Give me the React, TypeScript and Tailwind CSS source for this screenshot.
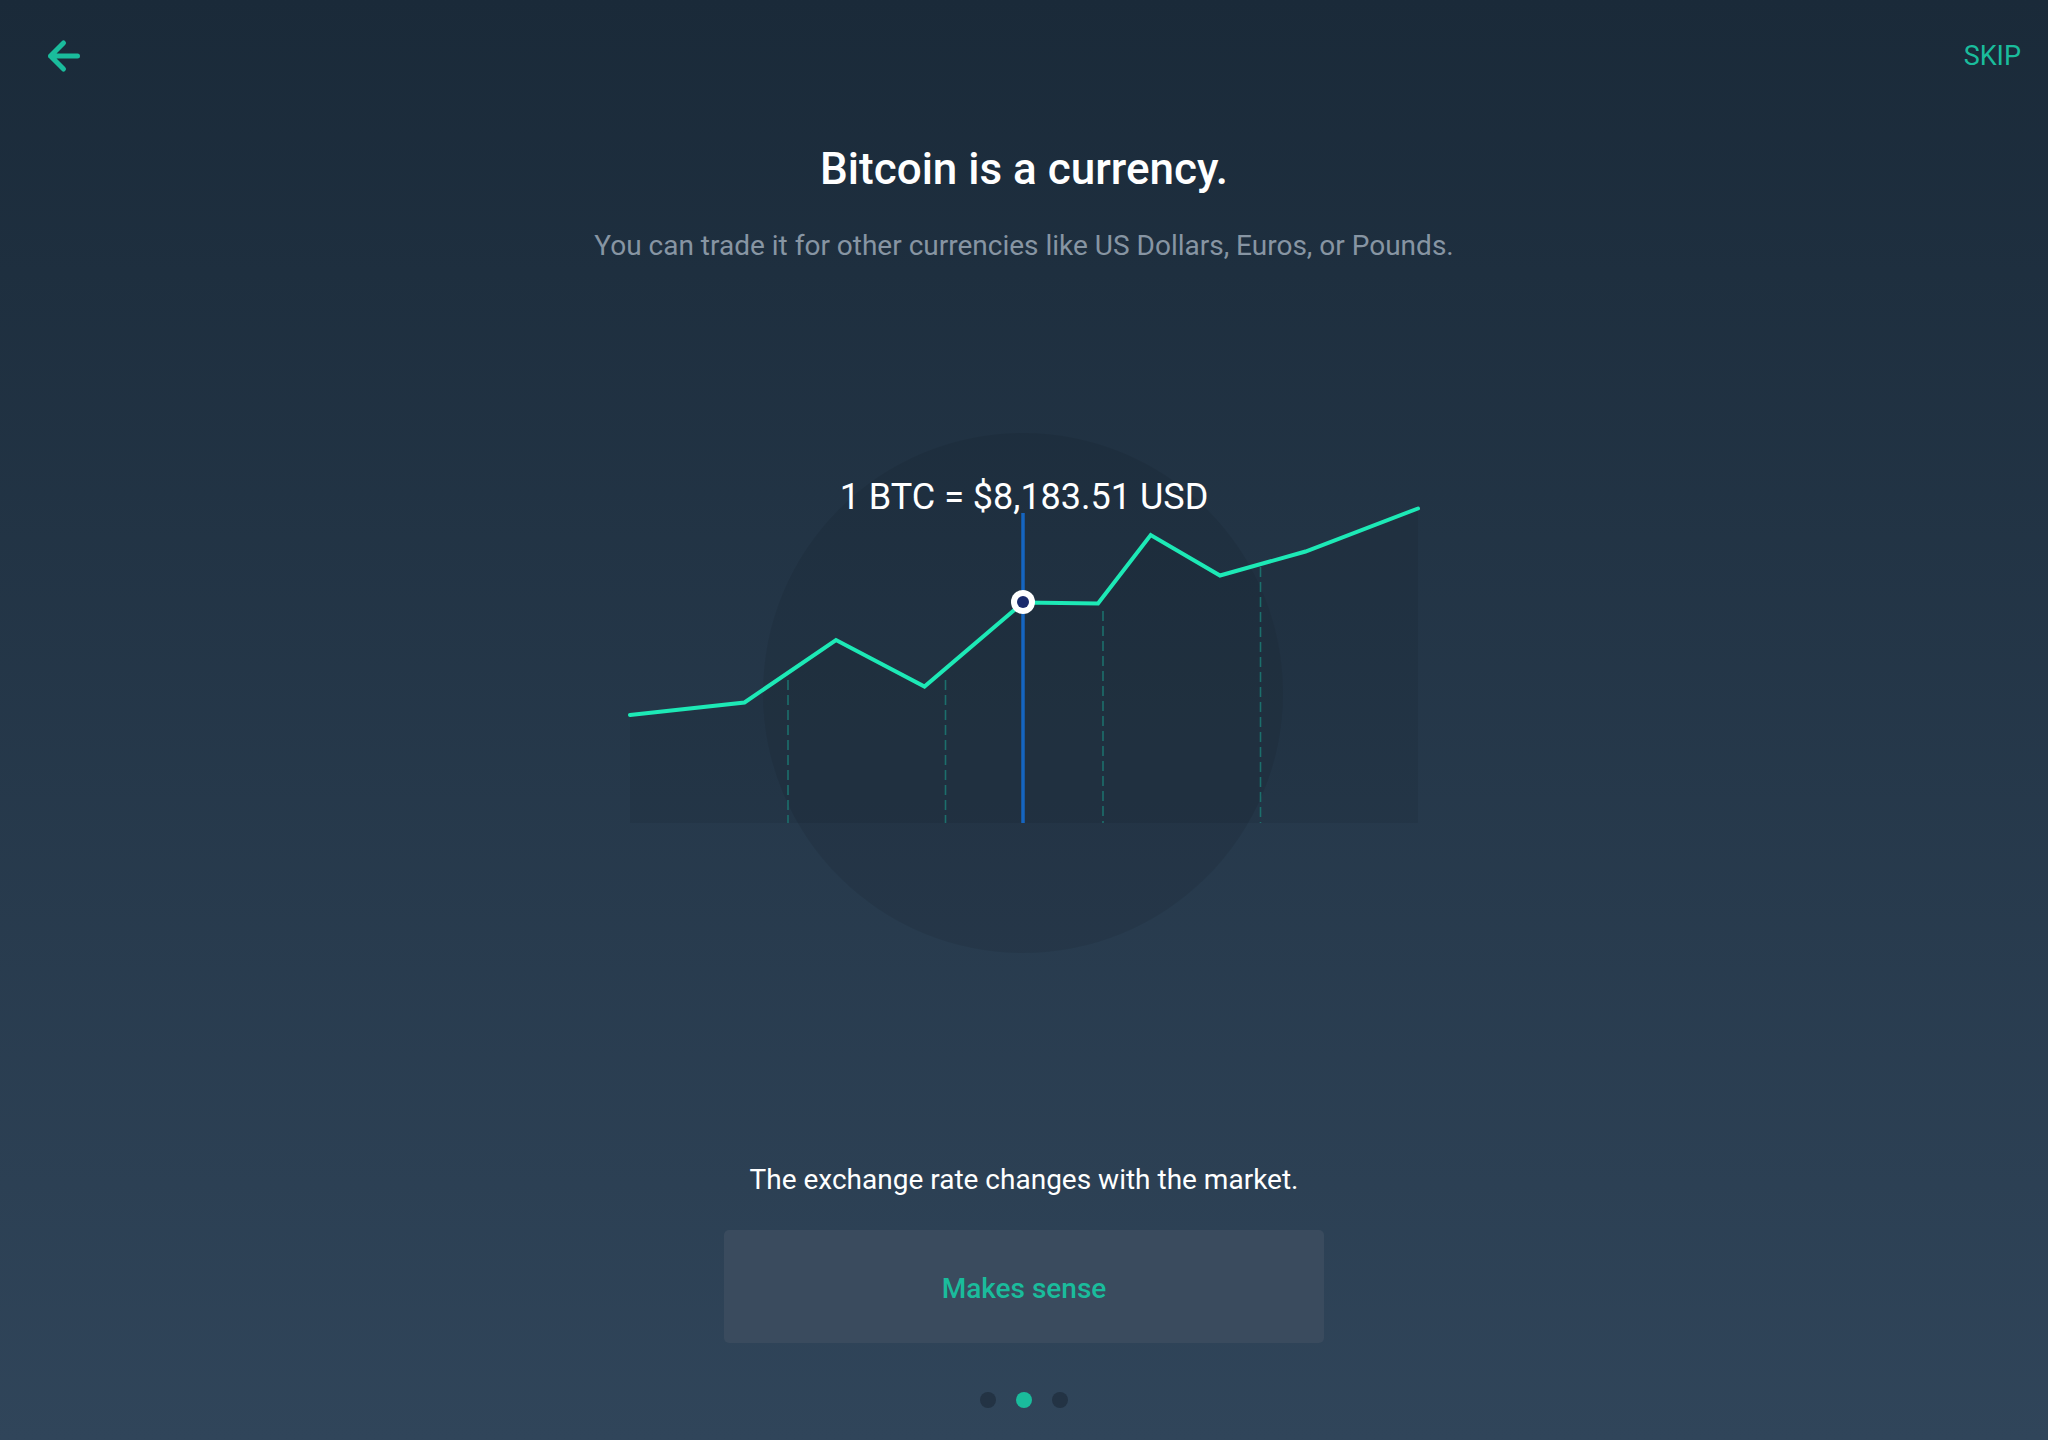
import { useState } from 'react';

const points: [number, number][] = [
    [630, 715],
    [744.5, 702.5],
    [836, 640],
    [924.5, 686.5],
    [1023, 602.5],
    [1098, 603.5],
    [1150.7, 535],
    [1220, 575.5],
    [1305.5, 551.5],
    [1418, 508.5],
];

// vertical grid guides, x and where the dashes begin
const guides: [number, number][] = [
    [788, 680],
    [945.5, 680],
    [1103, 611],
    [1260.5, 567],
];

function BackArrow() {
    return (
        <svg width="36" height="36" viewBox="0 0 36 36" fill="none">
            <path
                d="M4.5 18H31.5M17.5 5L4.5 18L17.5 31"
                stroke="#1abc9c"
                strokeWidth="5"
                strokeLinecap="round"
                strokeLinejoin="round"
            />
        </svg>
    );
}

function PriceChart() {
    const line = points.map(([x, y]) => `${x},${y}`).join(' ');
    const area = `${line} 1418,823 630,823`;

    return (
        <div className="relative w-[800px] h-[530px]">
            <svg width="800" height="530" viewBox="624 430 800 530" className="block">
                <circle cx="1023" cy="693" r="260" fill="#000" fillOpacity="0.07" />
                <polygon points={area} fill="#000" fillOpacity="0.06" />
                {guides.map(([x, y]) => (
                    <line
                        key={x}
                        x1={x}
                        y1={y}
                        x2={x}
                        y2={823}
                        stroke="#1c6f6c"
                        strokeWidth="1.6"
                        strokeDasharray="10 5"
                    />
                ))}
                <line x1="1023" y1="513" x2="1023" y2="823" stroke="#1565c0" strokeWidth="3.5" />
                <polyline
                    points={line}
                    fill="none"
                    stroke="#1de9b6"
                    strokeWidth="4"
                    strokeLinecap="round"
                    strokeLinejoin="miter"
                />
                <circle cx="1023" cy="602" r="12" fill="#fff" />
                <circle cx="1023" cy="602" r="6" fill="#1a2a6c" />
            </svg>
            <div className="absolute left-0 right-0 top-[47px] text-center text-[36px] leading-[40px] text-white">
                1 BTC = $8,183.51 USD
            </div>
        </div>
    );
}

export default function App() {
    const [step] = useState(1);

    return (
        <div className="h-[1440px] w-full flex flex-col items-center bg-gradient-to-b from-[#1a2a39] to-[#30455a] font-[Roboto,sans-serif] overflow-hidden">
            <div className="w-full h-[112px] flex items-center justify-between pl-[46px] pr-[27px]">
                <BackArrow />
                <span className="text-[27px] leading-none text-[#1abc9c]">SKIP</span>
            </div>

            <h1 className="mt-[33px] text-[44px] leading-[48px] font-medium text-white">Bitcoin is a currency.</h1>
            <p className="mt-[37px] text-[28px] leading-[32px] text-[#8795a3]">
                You can trade it for other currencies like US Dollars, Euros, or Pounds.
            </p>

            <div className="mt-[168px]">
                <PriceChart />
            </div>

            <p className="mt-[202px] text-[28px] leading-[36px] text-white">
                The exchange rate changes with the market.
            </p>

            <button className="mt-[32px] w-[600px] h-[113px] pt-1 rounded-[5px] bg-[#3a4b5e] text-[28px] font-medium text-[#1abc9c]">
                Makes sense
            </button>

            <div className="mt-[49px] flex gap-[20px]">
                {[0, 1, 2].map((i) => (
                    <span
                        key={i}
                        className={i === step ? 'w-4 h-4 rounded-full bg-[#1abc9c]' : 'w-4 h-4 rounded-full bg-[#233344]'}
                    />
                ))}
            </div>
        </div>
    );
}
